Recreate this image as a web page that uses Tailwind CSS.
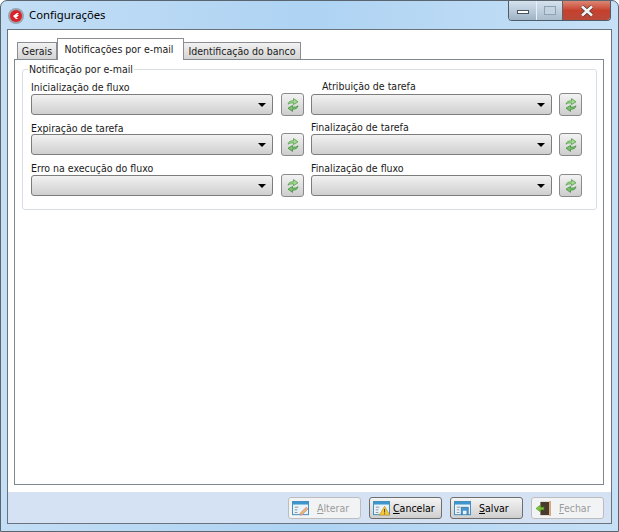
<!DOCTYPE html>
<html><head><meta charset="utf-8">
<script src="https://cdn.jsdelivr.net/npm/@tailwindcss/browser@4"></script>
<title>Configurações</title></head>
<body class="m-0 bg-white">
<svg width="0" height="0" class="absolute"><defs>
<g id="sync"><path d="M3 7.2 C3.5 4.6 5.5 3.8 8.5 3.8 V1.6 L13 4.8 L8.5 7.6 V5.8 C6.5 5.8 4.5 6 3 7.2Z" fill="#a5d890" stroke="#4f9f46" stroke-width=".8"/><path d="M13 8.8 C12.5 11.4 10.5 12.2 7.5 12.2 V14.4 L3 11.2 L7.5 8.4 V10.2 C9.5 10.2 11.5 10 13 8.8Z" fill="#7fbf6c" stroke="#3f9040" stroke-width=".8"/></g>
<g id="winpic"><rect x=".5" y=".5" width="18" height="15" fill="#e9f3fa" stroke="#2f83b8"/><rect x="1" y="1" width="17" height="3" fill="#3d95cb"/><path d="M3 7h4M3 10h3M3 13h3" stroke="#8a8a8a"/></g>
</defs></svg>
<div class="w-[619px] h-[532px] flex flex-col overflow-hidden rounded-t-[7px] border border-[#5b6570] bg-gradient-to-r from-[#c3def5] via-[#aed3f3] to-[#c6e0f6] font-['DejaVu_Sans_Condensed','DejaVu_Sans',sans-serif] text-[10.5px] leading-[14px] text-[#1a1a1a]">
  <!-- title bar -->
  <div class="h-[28px] flex items-start shrink-0 pl-[7px] pr-[7px]">
    <div class="mt-[7px] w-[16px] h-[16px] rounded-full bg-[#9aa3ad] flex items-center justify-center">
      <div class="w-[12px] h-[12px] rounded-full bg-[#d8232a] flex items-center justify-center">
        <svg width="8" height="8" viewBox="0 0 8 8"><path d="M1 4 L5 1 H7 L5 3 H7 L5 5 H4 L6 7 H4 Z" fill="#fff"/></svg>
      </div>
    </div>
    <span class="ml-[5px] mt-[7px] font-['Noto_Sans','Open_Sans',sans-serif] text-[11.3px] text-black">Configurações</span>
    <div class="ml-auto flex h-[20px] border border-t-0 border-[#4f5d6b] rounded-b-[4px] overflow-hidden">
      <div class="w-[28px] bg-gradient-to-b from-[#d5e2ee] to-[#9fb3c6] border-r border-[#e8eff5] flex items-center justify-center"><div class="w-[12px] h-[4px] bg-white border border-[#46525e] mt-[3px]"></div></div>
      <div class="w-[26px] bg-gradient-to-b from-[#d5e2ee] to-[#a9bccd] border-r border-[#59636e] flex items-center justify-center"><div class="w-[12px] h-[9px] border border-[#8fa1b2] bg-[#c4d3e0]"></div></div>
      <div class="w-[47px] bg-gradient-to-b from-[#dc8674] via-[#c6402d] to-[#b8493a] flex items-center justify-center">
        <svg width="14" height="12" viewBox="0 0 14 12"><path d="M2 1.5 L12 10.5 M12 1.5 L2 10.5" stroke="#4a3a3a" stroke-width="4"/><path d="M2 1.5 L12 10.5 M12 1.5 L2 10.5" stroke="#f4f4f4" stroke-width="2.6"/></svg>
      </div>
    </div>
  </div>
  <!-- client -->
  <div class="flex-1 mx-[6px] mb-[7px] border border-[#69727d] flex flex-col bg-white min-h-0">
    <div class="flex-1 min-h-0 pl-[6px] pr-[7px] pt-[7px] pb-[7px] flex flex-col">
      <!-- tabs -->
      <div class="h-[22px] flex items-end pl-[3px] shrink-0 relative z-10 whitespace-nowrap">
        <div class="h-[17px] w-[40px] bg-gradient-to-b from-[#f2f2f2] to-[#d4d4d4] border border-b-0 border-[#8a8e94] flex items-center justify-center">Gerais</div>
        <div class="h-[22px] w-[127px] bg-white border border-b-0 border-[#8a8e94] -mb-px pb-[2px] pr-[3px] flex items-center justify-center">Notificações por e-mail</div>
        <div class="h-[17px] w-[117px] bg-gradient-to-b from-[#f2f2f2] to-[#d4d4d4] border border-b-0 border-l-0 border-[#8a8e94] flex items-center justify-center">Identificação do banco</div>
      </div>
      <!-- page -->
      <div class="flex-1 min-h-0 border border-[#82878e] px-[7px] pt-[2px]">
        <fieldset class="h-[148px] border border-[#d5dfe5] rounded-[3px] pl-[8px] pr-[14px] m-0">
          <legend class="ml-[-3px] px-[1px] h-[14px] leading-[12px] relative top-[1px]">Notificação por e-mail</legend>
          <div class="grid grid-cols-[280px_271px] mt-[5px]">
            <div class="h-[41px]">
              <div class="h-[12px] leading-[12px]">Inicialização de fluxo</div>
              <div class="flex items-center gap-[8px]"><div class="w-[242px] h-[21px] rounded-[3px] border border-[#7d7d7d] bg-gradient-to-b from-[#f2f2f2] to-[#cfcfcf] flex items-center justify-end pr-[6px]"><div class="w-0 h-0 border-x-[4px] border-x-transparent border-t-[4px] border-t-black"></div></div>
              <div class="w-[23px] h-[23px] rounded-[3px] border border-[#8a8a8a] bg-gradient-to-b from-[#f3f3f3] to-[#cdcdcd] flex items-center justify-center"><svg width="16" height="16" viewBox="0 0 16 16"><use href="#sync"/></svg></div></div>
            </div>
            <div class="h-[41px]">
              <div class="h-[12px] leading-[12px] pl-[11px] -mt-px">Atribuição de tarefa</div>
              <div class="flex items-center gap-[7px] mt-px"><div class="w-[241px] h-[21px] rounded-[3px] border border-[#7d7d7d] bg-gradient-to-b from-[#f2f2f2] to-[#cfcfcf] flex items-center justify-end pr-[6px]"><div class="w-0 h-0 border-x-[4px] border-x-transparent border-t-[4px] border-t-black"></div></div>
              <div class="w-[23px] h-[23px] rounded-[3px] border border-[#8a8a8a] bg-gradient-to-b from-[#f3f3f3] to-[#cdcdcd] flex items-center justify-center"><svg width="16" height="16" viewBox="0 0 16 16"><use href="#sync"/></svg></div></div>
            </div>
            <div class="h-[40px]">
              <div class="h-[12px] leading-[12px]">Expiração de tarefa</div>
              <div class="flex items-center gap-[8px] -mt-px"><div class="w-[242px] h-[21px] rounded-[3px] border border-[#7d7d7d] bg-gradient-to-b from-[#f2f2f2] to-[#cfcfcf] flex items-center justify-end pr-[6px]"><div class="w-0 h-0 border-x-[4px] border-x-transparent border-t-[4px] border-t-black"></div></div>
              <div class="w-[23px] h-[23px] rounded-[3px] border border-[#8a8a8a] bg-gradient-to-b from-[#f3f3f3] to-[#cdcdcd] flex items-center justify-center"><svg width="16" height="16" viewBox="0 0 16 16"><use href="#sync"/></svg></div></div>
            </div>
            <div class="h-[40px]">
              <div class="h-[12px] leading-[12px] -mt-px">Finalização de tarefa</div>
              <div class="flex items-center gap-[7px]"><div class="w-[241px] h-[21px] rounded-[3px] border border-[#7d7d7d] bg-gradient-to-b from-[#f2f2f2] to-[#cfcfcf] flex items-center justify-end pr-[6px]"><div class="w-0 h-0 border-x-[4px] border-x-transparent border-t-[4px] border-t-black"></div></div>
              <div class="w-[23px] h-[23px] rounded-[3px] border border-[#8a8a8a] bg-gradient-to-b from-[#f3f3f3] to-[#cdcdcd] flex items-center justify-center"><svg width="16" height="16" viewBox="0 0 16 16"><use href="#sync"/></svg></div></div>
            </div>
            <div class="h-[41px]">
              <div class="h-[12px] leading-[12px]">Erro na execução do fluxo</div>
              <div class="flex items-center gap-[8px]"><div class="w-[242px] h-[21px] rounded-[3px] border border-[#7d7d7d] bg-gradient-to-b from-[#f2f2f2] to-[#cfcfcf] flex items-center justify-end pr-[6px]"><div class="w-0 h-0 border-x-[4px] border-x-transparent border-t-[4px] border-t-black"></div></div>
              <div class="w-[23px] h-[23px] rounded-[3px] border border-[#8a8a8a] bg-gradient-to-b from-[#f3f3f3] to-[#cdcdcd] flex items-center justify-center"><svg width="16" height="16" viewBox="0 0 16 16"><use href="#sync"/></svg></div></div>
            </div>
            <div class="h-[41px]">
              <div class="h-[12px] leading-[12px]">Finalização de fluxo</div>
              <div class="flex items-center gap-[7px]"><div class="w-[241px] h-[21px] rounded-[3px] border border-[#7d7d7d] bg-gradient-to-b from-[#f2f2f2] to-[#cfcfcf] flex items-center justify-end pr-[6px]"><div class="w-0 h-0 border-x-[4px] border-x-transparent border-t-[4px] border-t-black"></div></div>
              <div class="w-[23px] h-[23px] rounded-[3px] border border-[#8a8a8a] bg-gradient-to-b from-[#f3f3f3] to-[#cdcdcd] flex items-center justify-center"><svg width="16" height="16" viewBox="0 0 16 16"><use href="#sync"/></svg></div></div>
            </div>
          </div>
        </fieldset>
      </div>
    </div>
    <!-- footer -->
    <div class="h-[31px] shrink-0 bg-[#d5e2f3] flex items-start justify-end gap-[8px] pt-[5px] pr-[7px]">
      <div class="w-[73px] h-[22px] rounded-[3px] border border-[#bdbdbd] bg-[#f2f3f4] flex items-center pl-[3px] text-[#9b9b9b]">
        <svg width="17" height="15" viewBox="0 0 19 17" class="shrink-0"><use href="#winpic"/><path d="M9 14 L16 7 L18 9 L11 16 L9 16Z" fill="#e8b860" stroke="#c47ab0" stroke-width=".7"/></svg>
        <span class="ml-[8px]"><u>A</u>lterar</span>
      </div>
      <div class="w-[73px] h-[22px] rounded-[3px] border border-[#6e6e6e] bg-gradient-to-b from-[#f4f4f4] to-[#cfcfcf] flex items-center pl-[3px] text-black">
        <svg width="17" height="15" viewBox="0 0 19 17" class="shrink-0"><use href="#winpic"/><path d="M13 6 L19 16 H7 Z" fill="#f5c83a" stroke="#b88a20" stroke-width=".7"/><path d="M13 9v4M13 14v1" stroke="#333"/></svg>
        <span class="ml-[3px]"><u>C</u>ancelar</span>
      </div>
      <div class="w-[73px] h-[22px] rounded-[3px] border border-[#6e6e6e] bg-gradient-to-b from-[#f4f4f4] to-[#cfcfcf] flex items-center pl-[3px] text-black">
        <svg width="17" height="15" viewBox="0 0 19 17" class="shrink-0"><use href="#winpic"/><rect x="8" y="7" width="8" height="8" fill="#4a95cc" stroke="#2f6f9f" stroke-width=".7"/><rect x="10" y="11" width="4" height="4" fill="#e9f3fa"/></svg>
        <span class="ml-[8px]"><u>S</u>alvar</span>
      </div>
      <div class="w-[73px] h-[22px] rounded-[3px] border border-[#bdbdbd] bg-[#f2f3f4] flex items-center pl-[3px] text-[#9b9b9b]">
        <svg width="17" height="15" viewBox="0 0 19 17" class="shrink-0"><rect x="6" y="1" width="10" height="15" fill="#4a3a2e"/><rect x="16" y="0" width="2" height="17" fill="#d9a878"/><path d="M1 8.5 L6 4.5 V7 H10 V10 H6 V12.5Z" fill="#7cc23c" stroke="#4d8a22" stroke-width=".6"/></svg>
        <span class="ml-[7px]"><u>F</u>echar</span>
      </div>
    </div>
  </div>
</div>
</body></html>
